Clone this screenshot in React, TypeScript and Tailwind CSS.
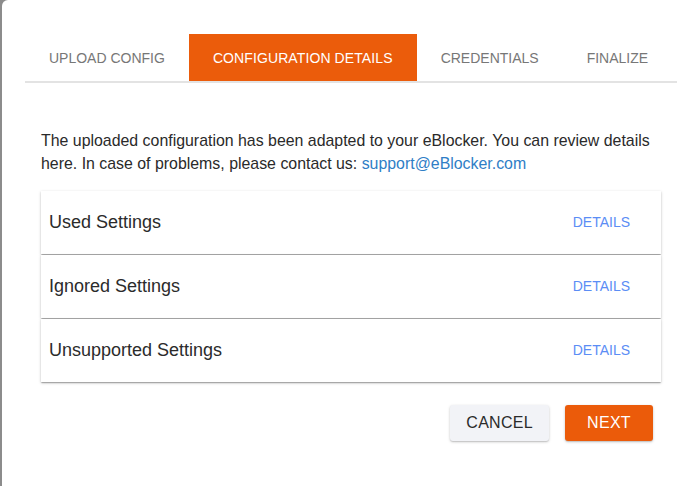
import React from 'react';

const tabs = ['Upload Config', 'Configuration Details', 'Credentials', 'Finalize'];
const rows = ['Used Settings', 'Ignored Settings', 'Unsupported Settings'];

export default function App() {
  const active = 1;

  return (
    <div className="w-[700px] h-[486px] bg-[#8c8c8c] pl-[2px] overflow-hidden font-['Liberation_Sans',Arial,sans-serif]">
      <div className="h-full bg-white rounded-tl-[6px]">
        {/* Tabs */}
        <div className="pt-[34px] ml-[23px] mr-[23px]">
          <div className="flex border-b-2 border-[#e3e3e3]">
            {tabs.map((tab, i) => (
              <div
                key={tab}
                className={
                  i === active
                    ? 'h-[47px] px-6 pt-[2px] flex items-center text-[14px] tracking-[0.1px] uppercase bg-[#eb5c0b] text-white'
                    : 'h-[47px] px-6 pt-[2px] flex items-center text-[14px] uppercase text-[#777777]'
                }
              >
                {tab}
              </div>
            ))}
          </div>
        </div>

        {/* Body */}
        <div className="px-[39px] pt-[46px]">
          <p className="text-[15.9px] leading-[23px] text-[#2a2a2a]">
            The uploaded configuration has been adapted to your eBlocker. You can review details here. In case of problems, please contact us:{' '}
            <a className="text-[#2f7ec6]">support@eBlocker.com</a>
          </p>

          <div className="mt-[16px] flex flex-col gap-[1px]">
            {rows.map((row) => (
              <div
                key={row}
                className="h-[63px] flex items-center justify-between pl-2 pr-[23px] bg-white shadow-[0_1px_3px_rgba(0,0,0,0.2),0_1px_1px_rgba(0,0,0,0.14),0_2px_1px_-1px_rgba(0,0,0,0.12)]"
              >
                <span className="text-[18px] text-[#2b2b2b]">{row}</span>
                <button className="px-2 py-1 text-[14px] uppercase text-[#5b8df5]">Details</button>
              </div>
            ))}
          </div>

          {/* Actions */}
          <div className="mt-[23px] pr-2 flex justify-end gap-4">
            <button className="h-[36px] px-4 rounded-[3px] bg-[#f2f3f7] text-[16px] tracking-[0.3px] text-[#2b2b2b] uppercase shadow-[0_1px_3px_rgba(0,0,0,0.2),0_1px_1px_rgba(0,0,0,0.1)]">
              Cancel
            </button>
            <button className="h-[36px] min-w-[88px] px-4 rounded-[3px] bg-[#eb5b0a] text-[16px] tracking-[0.3px] text-white uppercase shadow-[0_1px_3px_rgba(0,0,0,0.2),0_1px_1px_rgba(0,0,0,0.1)]">
              Next
            </button>
          </div>
        </div>
      </div>
    </div>
  );
}
